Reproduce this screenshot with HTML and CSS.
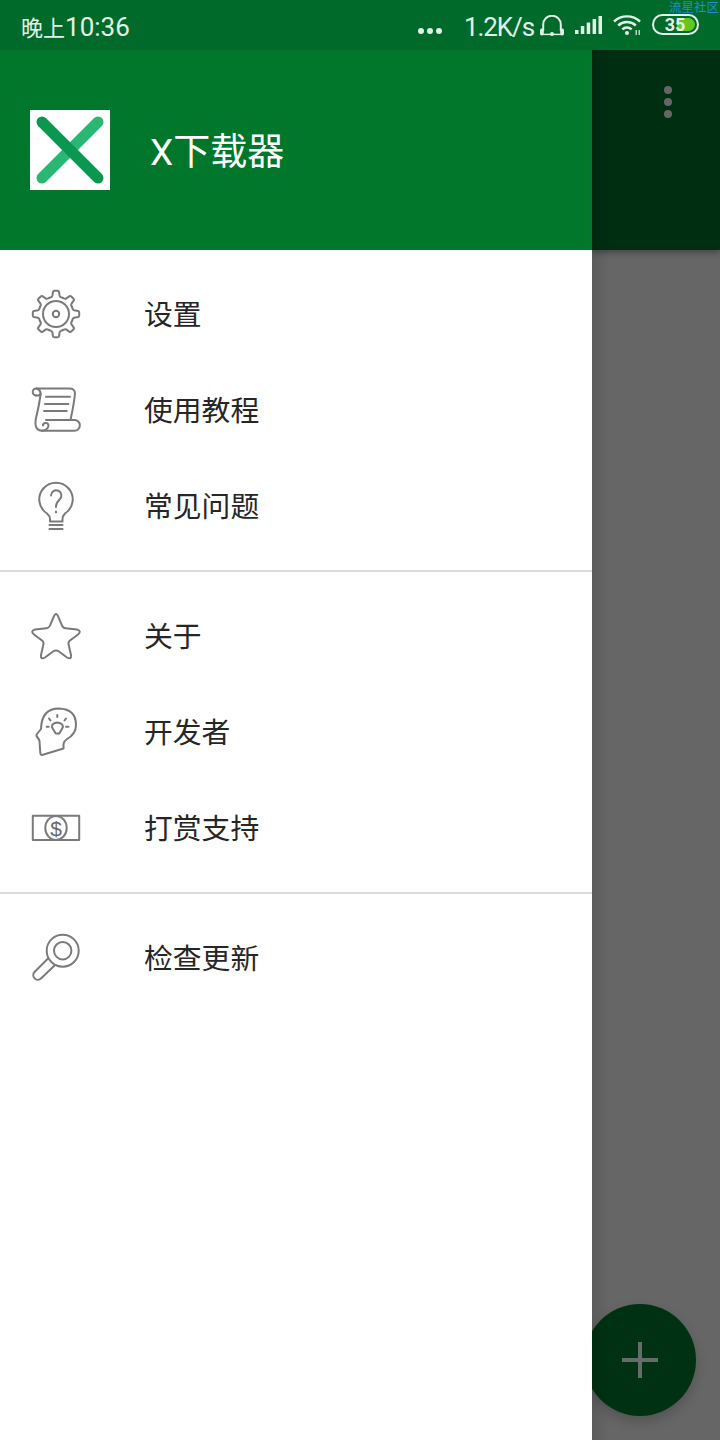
FILE: index.html
```html
<!DOCTYPE html>
<html lang="zh-CN">
<head>
<meta charset="utf-8">
<title>X下载器</title>
<link rel="stylesheet" href="styles.css">
</head>
<body>
<div class="screen">
  <div class="statusbar">
    <span class="time"><span class="time-cjk">晚上</span>10:36</span>
    <div class="status-right">
      <span class="more"><i></i><i></i><i></i></span>
      <span class="speed">1.2K/s</span>
      <svg class="st-headset" width="24" height="21" viewBox="0 0 24 21"><path d="M3.200 16V9.500a8.800 8.800 0 0 1 17.600 0V16" fill="none" stroke="currentColor" stroke-width="2"/><rect x="0" y="13.500" width="3.800" height="7" rx="1.700" fill="currentColor"/><rect x="20.200" y="13.500" width="3.800" height="7" rx="1.700" fill="currentColor"/><path d="M3 19.400H21" stroke="currentColor" stroke-width="1.400"/><circle cx="12" cy="19" r="2" fill="currentColor"/></svg>
      <svg class="st-signal" width="27" height="18" viewBox="0 0 27 18"><path d="M0 18h3.500v-4H0zM5.800 18h3.500V10H5.800zM11.700 18h3.500V6.500h-3.500zM17.600 18h3.500V3h-3.500zM23.500 18H27V0h-3.500z" fill="currentColor"/></svg>
      <svg class="st-wifi" width="28" height="20" viewBox="0 0 28 20"><g fill="none" stroke="currentColor" stroke-width="2.400"><path d="M1 6.500a19 19 0 0 1 26 0"/><path d="M5.200 10.500a13 13 0 0 1 17.600 0"/><path d="M9.300 14.300a7 7 0 0 1 9.400 0"/></g><circle cx="14" cy="18" r="2" fill="currentColor"/><path d="M23.200 20v-5M26.200 15v5" stroke="currentColor" stroke-width="1.200"/></svg>
      <div class="battery"><span class="battery-level"></span><span class="battery-num">35</span></div>
    </div>
    <span class="watermark">流星社区</span>
  </div>
  <div class="main">
    <aside class="drawer">
      <header class="drawer-head">
        <svg class="logo" width="80" height="80" viewBox="0 0 80 80"><rect width="80" height="80" fill="#fff"/><path d="M68 12L12 68" stroke="#2bb673" stroke-width="11" stroke-linecap="round"/><path d="M12 12L68 68" stroke="#0a9850" stroke-width="11" stroke-linecap="round"/></svg>
        <span class="app-name">X下载器</span>
      </header>
      <nav class="menu-group">
        <a class="menu-item">
          <svg class="icon" viewBox="0 0 48 48"><defs><path id="gear-tooth" d="M17.300 7.830C18.800 7.400 19.900 7.400 20.300 6L21 1.800Q21.200.8 22.400.8H25.600Q26.800.8 27 1.800L27.700 6C28.100 7.400 29.200 7.400 30.700 7.830"/></defs><use href="#gear-tooth"/><use href="#gear-tooth" transform="rotate(45 24 24)"/><use href="#gear-tooth" transform="rotate(90 24 24)"/><use href="#gear-tooth" transform="rotate(135 24 24)"/><use href="#gear-tooth" transform="rotate(180 24 24)"/><use href="#gear-tooth" transform="rotate(225 24 24)"/><use href="#gear-tooth" transform="rotate(270 24 24)"/><use href="#gear-tooth" transform="rotate(315 24 24)"/><circle cx="24" cy="24" r="13"/><circle cx="24" cy="24" r="3.200"/></svg>
          <span class="label">设置</span>
        </a>
        <a class="menu-item">
          <svg class="icon" viewBox="0 0 48 48"><path d="M4 9.500a3.500 3.500 0 0 1 .5-7H37Q43 2.300 43 7.500Q42 18 38.500 34"/><path d="M4 9.500H6.500Q8.700 9 8.500 6.500Q8 3.500 4.500 2.500"/><path d="M8.700 8Q7 20 3.800 33Q2 44.700 10 44.700H42.500a5.300 5.300 0 0 0 0-10.700H14"/><path d="M10 44.700Q16 44 16.500 39.500Q16 36.500 13 37Q11 37.500 11 39.500"/><path d="M14 10.700H38M13 18H36.300M12 25H34.700"/></svg>
          <span class="label">使用教程</span>
        </a>
        <a class="menu-item">
          <svg class="icon" viewBox="0 0 48 48"><path d="M18 39.500V37Q18 34 15 31.500A16.700 16.700 0 1 1 33 31.500Q30.500 34 30.500 37V39.500H18Z"/><path d="M17.500 43H30.500M17.500 47H30.500"/><path d="M19 13.500a5.200 5.200 0 1 1 8.500 4C25.500 19.500 24 21 24 25"/><circle class="solid" cx="24" cy="30" r="1.200"/></svg>
          <span class="label">常见问题</span>
        </a>
      </nav>
      <div class="divider"></div>
      <nav class="menu-group">
        <a class="menu-item">
          <svg class="icon" viewBox="0 0 48 48"><path d="M21.600 5Q24-1 26.400 5L30 13.500Q31 16 33.500 16.200L45 17.500Q50 19 46 22.500L38 28.500Q36 30 36.600 32.500L39 43Q39.500 48 35 45.500L27 39.500Q24 37.500 21 39.500L13 45.500Q8.500 48 9 43L11.400 32.500Q12 30 10 28.500L2 22.500Q-2 19 3 17.500L14.500 16.200Q17 16 18 13.500Z"/></svg>
          <span class="label">关于</span>
        </a>
        <a class="menu-item">
          <svg class="icon" viewBox="0 0 48 48"><path d="M31.500 40.500L10 47Q8.500 47 8.300 45L7.500 33Q7.300 31.500 5.500 29.500Q3.800 27.500 5 26L9 21Q9.500.5 27 .5Q44 1 44 17Q44 26 35 31Q32 33 31.500 36Z"/><path d="M25.300 14.500Q30.800 15 31 19L27.300 25.500H23.700L19.800 19Q20 15 25.300 14.500Z"/><path d="M25.300 7V9M17 10.500L18.500 12.500M34 10.500L32.500 12.500M14.700 18.700H16.800M34 18.700H36.500"/></svg>
          <span class="label">开发者</span>
        </a>
        <a class="menu-item">
          <svg class="icon" viewBox="0 0 48 48"><rect x=".8" y="11.800" width="46.400" height="24.200"/><ellipse cx="24" cy="23.900" rx="10.700" ry="12"/><text class="dollar" x="24" y="31.500" text-anchor="middle">$</text></svg>
          <span class="label">打赏支持</span>
        </a>
      </nav>
      <div class="divider"></div>
      <nav class="menu-group">
        <a class="menu-item">
          <svg class="icon" viewBox="0 0 48 48"><circle cx="30.700" cy="16.700" r="16"/><circle cx="30.700" cy="16.700" r="8.700"/><path d="M15.500 25L2.500 38a4.600 4.600 0 0 0 6.500 6.500L22.500 31.500"/></svg>
          <span class="label">检查更新</span>
        </a>
      </nav>
    </aside>
    <div class="scrim">
      <div class="appbar"><span class="overflow"><i></i><i></i><i></i></span></div>
      <div class="fab"><svg width="36" height="36" viewBox="0 0 36 36"><path d="M0 18H36M18 0V36" stroke="#686b68" stroke-width="4"/></svg></div>
    </div>
  </div>
</div>
</body>
</html>
```
FILE: styles.css
```css
* { box-sizing: border-box; }
html, body { margin: 0; padding: 0; }
body { width: 720px; height: 1440px; overflow: hidden; background: #fff; font-family: Roboto, "Noto Sans CJK SC", sans-serif; }
.screen { width: 720px; height: 1440px; display: flex; flex-direction: column; position: relative; }

.statusbar { height: 50px; flex: none; background: #006a2b; color: #e3f0e8; display: flex; align-items: center; justify-content: space-between; padding: 4px 21px 0 21px; }
.time { font-size: 26px; line-height: 46px; padding-top: 2px; }
.time-cjk { font-size: 22px; }
.status-right { display: flex; align-items: center; height: 46px; }
.more { display: flex; gap: 3px; margin-top: 8px; margin-right: 22px; }
.more i { width: 6px; height: 6px; border-radius: 50%; background: #e3f0e8; display: block; }
.speed { font-size: 26px; letter-spacing: -1.100px; margin-right: 6px; }
.st-headset { margin-right: 11px; margin-top: -3px; }
.st-signal { margin-right: 11px; margin-top: -4px; }
.st-wifi { margin-right: 11px; margin-top: -4px; }
.battery { width: 47px; height: 21px; border: 2px solid #e3f0e8; border-radius: 11px; position: relative; display: flex; align-items: center; justify-content: center; margin-top: -5px; padding-right: 1px; }
.battery-level { position: absolute; right: 2px; top: 2px; bottom: 2px; width: 18px; background: #63c81e; border-radius: 0 8px 8px 0; }
.battery-num { position: relative; font-size: 18px; font-weight: 700; line-height: 17px; color: #e3f0e8; }
.watermark { position: absolute; top: 0; right: 1px; font-size: 12.500px; line-height: 14px; color: #1f8fd0; font-family: "Noto Sans CJK SC", sans-serif; white-space: nowrap; }

.main { flex: 1; display: flex; min-height: 0; }
.drawer { width: 592px; flex: none; background: #fff; display: flex; flex-direction: column; }
.drawer-head { height: 200px; flex: none; background: #00772b; display: flex; align-items: center; padding-left: 30px; }
.logo { display: block; }
.app-name { margin-left: 40px; padding-bottom: 3px; font-size: 37px; color: #fff; font-family: Roboto, "Noto Sans CJK SC", sans-serif; }
.menu-group { padding: 16px 0; display: flex; flex-direction: column; }
.menu-item { height: 96px; display: flex; align-items: center; padding-left: 32px; }
.icon { width: 48px; height: 48px; flex: none; fill: none; stroke: #7a7a7a; stroke-width: 2; stroke-linecap: round; stroke-linejoin: round; overflow: visible; }
.icon .solid { fill: #7a7a7a; stroke: none; }
.icon .dollar { font-family: "Liberation Sans", sans-serif; font-size: 21px; fill: #6a6a6a; stroke: none; }
.label { margin-left: 64px; padding-bottom: 4px; font-size: 28.800px; color: #262626; font-family: "Noto Sans CJK SC", sans-serif; }
.divider { height: 2px; flex: none; background: #dcdcdc; }

.scrim { flex: 1; min-width: 0; background: #666; position: relative; overflow: hidden; }
.appbar { height: 200px; background: #002e11; display: flex; justify-content: flex-end; padding: 36px 48px 0 0; box-shadow: 0 3px 6px rgba(0,0,0,.3); }
.overflow { display: flex; flex-direction: column; gap: 4px; }
.overflow i { width: 8px; height: 8px; border-radius: 50%; background: #666; display: block; }
.scrim::after { content: ""; position: absolute; inset: 0 auto 0 0; width: 18px; background: linear-gradient(90deg, rgba(0,0,0,.1), rgba(0,0,0,0)); }
.fab { position: absolute; right: 24px; bottom: 24px; width: 112px; height: 112px; border-radius: 50%; background: #003112; display: flex; align-items: center; justify-content: center; box-shadow: 0 6px 12px rgba(0,0,0,.18); }
.fab svg { display: block; }
```
